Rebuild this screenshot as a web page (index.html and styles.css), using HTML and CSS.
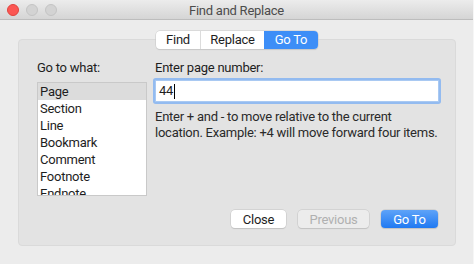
FILE: index.html
```html
<!DOCTYPE html>
<html lang="en">
<head>
  <meta charset="UTF-8" />
  <title>Find and Replace</title>
  <link rel="stylesheet" href="styles.css">
</head>
<body>

<div class="window">
  <!-- Başlık çubuğu -->
  <div class="titlebar">
    <div class="lights">
      <span class="light red"></span>
      <span class="light"></span>
      <span class="light"></span>
    </div>
    <div class="title">Find and Replace</div>
  </div>

  <div class="content">
    <div class="tabs">
      <span class="tab find">Find</span>
      <span class="tab replace">Replace</span>
      <span class="tab goto active">Go To</span>
    </div>

    <div class="panel">
      <div class="columns">
        <div class="left">
          <div class="label">Go to what:</div>
          <div class="list">
            <div class="item selected">Page</div>
            <div class="item">Section</div>
            <div class="item">Line</div>
            <div class="item">Bookmark</div>
            <div class="item">Comment</div>
            <div class="item">Footnote</div>
            <div class="item">Endnote</div>
          </div>
        </div>
        <div class="right">
          <div class="label">Enter page number:</div>
          <div class="field">44<span class="caret"></span></div>
          <p class="help">Enter + and - to move relative to the current<br>location. Example: +4 will move forward four items.</p>
        </div>
      </div>

      <div class="buttons">
        <button class="btn close">Close</button>
        <button class="btn disabled">Previous</button>
        <button class="btn primary">Go To</button>
      </div>
    </div>
  </div>
</div>

</body>
</html>
```

FILE: styles.css
```css
body {
  margin: 0;
  font-family: Roboto, "Liberation Sans", sans-serif;
  font-size: 13px;
  letter-spacing: -0.25px;
  color: #1e1e1e;
  background: #ffffff;
}

.window {
  width: 473px;
  height: 264px;
  background: #ececec;
  border-right: 1px solid #f6f6f6;
  overflow: hidden;
}

.titlebar {
  height: 19px;
  background: linear-gradient(to bottom, #ececec, #d5d5d5);
  border-bottom: 1px solid #bdbdbd;
  display: flex;
  align-items: center;
  justify-content: center;
}

.lights {
  position: absolute;
  left: 7px;
  top: 4px;
  display: flex;
  gap: 7px;
}

.light {
  width: 12px;
  height: 12px;
  border-radius: 50%;
  background: #d3d3d3;
  border: 0.5px solid #c4c4c4;
  box-sizing: border-box;
}

.light.red {
  background: #fc5753;
  border-color: #e0443e;
}

.title {
  color: #4c4c4c;
  font-size: 13px;
  padding-top: 1px;
}

.content {
  padding: 11px 17px 0 18px;
}

.tabs {
  display: flex;
  width: fit-content;
  margin-left: 138px;
  background: #ffffff;
  border-radius: 4px;
  box-shadow: 0 0 0 0.5px #c8c8c8, 0 1px 1px rgba(0, 0, 0, 0.12);
  position: relative;
  z-index: 1;
  height: 18px;
}

.tab {
  line-height: 18px;
  text-align: center;
  border-left: 1px solid #dcdcdc;
}

.tab.find {
  width: 44px;
  border-left: none;
}

.tab.replace {
  width: 63px;
}

.tab.goto {
  width: 54px;
}

.tab.active {
  background: #3d8ef7;
  color: #ffffff;
  border-radius: 0 4px 4px 0;
  border-left: none;
}

.panel {
  margin-top: -10px;
  height: 207px;
  background: #e3e3e3;
  border: 1px solid #dadada;
  border-radius: 4px;
  box-sizing: border-box;
  padding: 20px 16px 0 18px;
}

.columns {
  display: flex;
  gap: 8px;
}

.left {
  width: 110px;
  flex-shrink: 0;
}

.right {
  width: 284px;
  flex-shrink: 0;
}

.label {
  height: 16px;
  line-height: 16px;
}

.list {
  margin-top: 6px;
  height: 114px;
  background: #ffffff;
  border: 1px solid #c9c9c9;
  box-sizing: border-box;
  overflow: hidden;
}

.item {
  height: 17px;
  line-height: 17px;
  padding-left: 2px;
}

.item.selected {
  background: #dcdcdc;
}

.field {
  margin-top: 4px;
  height: 20px;
  line-height: 20px;
  background: #ffffff;
  border: 1px solid #a9c9f2;
  box-shadow: 0 0 0 2px #93bbf0;
  border-radius: 1px;
  padding-left: 3px;
  display: flex;
  align-items: center;
}

.caret {
  width: 1px;
  height: 15px;
  background: #000000;
  margin-left: 1px;
}

.help {
  margin: 7px 0 0;
  line-height: 16px;
  color: #2a2a2a;
  white-space: nowrap;
}

.buttons {
  display: flex;
  justify-content: flex-end;
  gap: 12px;
  margin-top: 14px;
  padding-right: 1px;
}

.btn {
  font-family: inherit;
  font-size: 13px;
  letter-spacing: -0.25px;
  height: 18px;
  padding: 0;
  border: none;
  border-radius: 4px;
  background: #ffffff;
  color: #1e1e1e;
  box-shadow: 0 0 0 0.5px #c4c4c4, 0 1px 1px rgba(0, 0, 0, 0.15);
}

.btn.close {
  width: 55px;
}

.btn.disabled {
  width: 71px;
  background: #ececec;
  color: #b0b0b0;
}

.btn.primary {
  width: 57px;
  background: linear-gradient(to bottom, #5ea3f8, #1f79f2);
  color: #ffffff;
}
```
